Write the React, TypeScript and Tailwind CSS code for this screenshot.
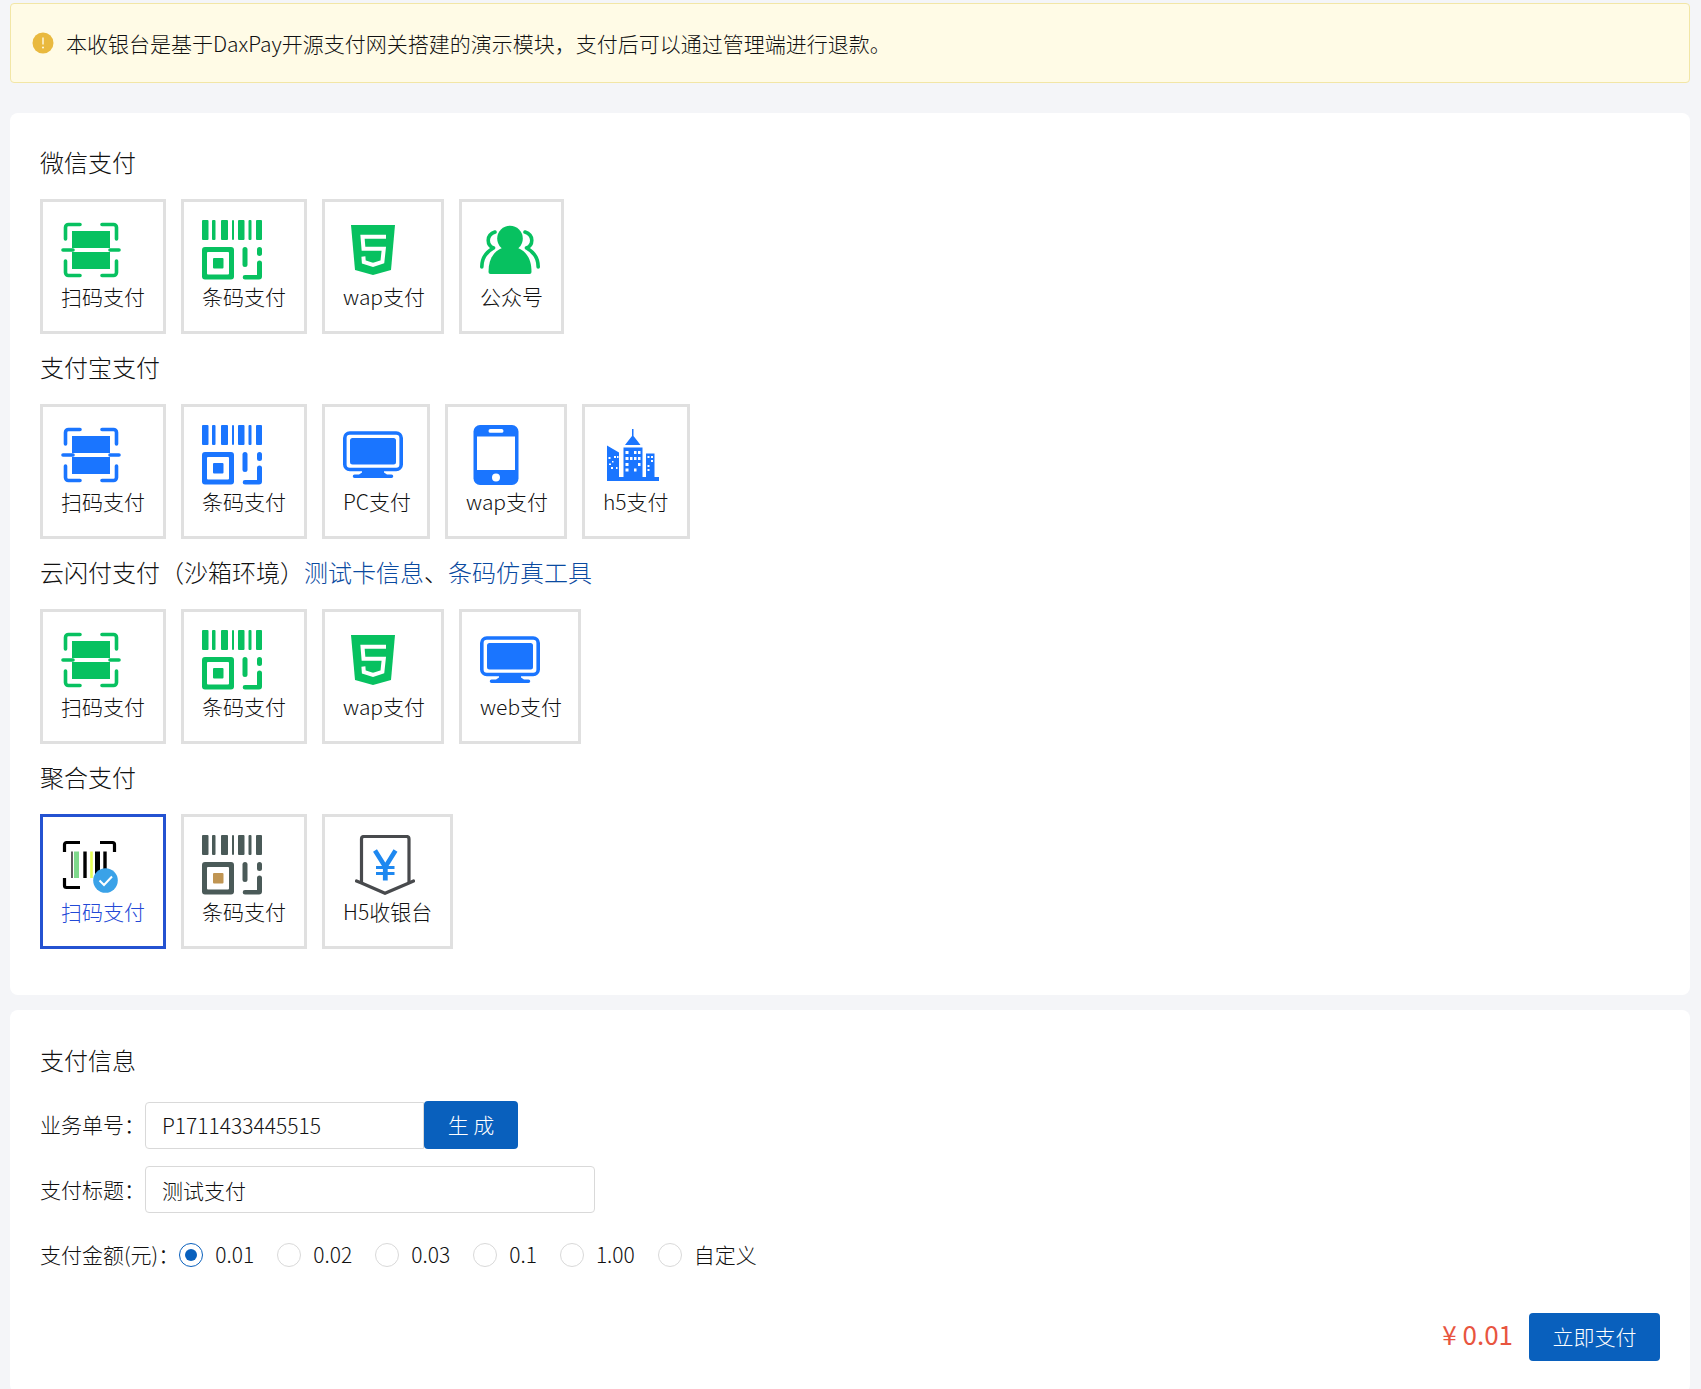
import React, { useState } from "react";

const FONT = "font-['Noto_Sans_CJK_SC',sans-serif]";

type IconProps = { color: string };

function ScanIcon({ color }: IconProps) {
  return (
    <svg viewBox="0 0 60 60" className="size-[60px]" fill="none" aria-hidden="true">
      <g stroke={color} strokeWidth="3.6" strokeLinecap="round" strokeLinejoin="round">
        <path d="M4.5 19V7.500a3 3 0 0 1 3-3H19M41 4.500h11.500a3 3 0 0 1 3 3V19M55.500 41v11.500a3 3 0 0 1-3 3H41M19 55.500H7.500a3 3 0 0 1-3-3V41" />
        <path d="M2 30h10M49 30h9" />
      </g>
      <path d="M11 11h38v17H11zM11 32h38v17H11z" fill={color} />
    </svg>
  );
}

function CodeIcon({ color, center }: IconProps & { center?: string }) {
  return (
    <svg viewBox="0 0 60 60" className="size-[60px]" fill={color} aria-hidden="true">
      <rect x="0" y="0" width="6.500" height="20" rx="1" />
      <rect x="10" y="0" width="3.500" height="20" rx="1" />
      <rect x="19" y="0" width="7" height="20" rx="1" />
      <rect x="30" y="0" width="2" height="20" rx="1" />
      <rect x="36" y="0" width="6.500" height="20" rx="1" />
      <rect x="46.500" y="0" width="3" height="20" rx="1" />
      <rect x="54" y="0" width="6" height="20" rx="1" />
      <path fillRule="evenodd" d="M3 27h26a3 3 0 0 1 3 3v26.500a3 3 0 0 1-3 3H3a3 3 0 0 1-3-3V30a3 3 0 0 1 3-3zM6 32a1 1 0 0 0-1 1v20.500a1 1 0 0 0 1 1h20a1 1 0 0 0 1-1V33a1 1 0 0 0-1-1z" />
      <rect x="11" y="38" width="10.500" height="10.500" rx="1" fill={center ?? color} />
      <rect x="40.500" y="27" width="5" height="20" rx="2.500" />
      <rect x="55" y="27" width="5" height="9" rx="2.500" />
      <path d="M57.500 40.500a2.500 2.500 0 0 1 2.500 2.500v13.500a3 3 0 0 1-3 3H43a2.300 2.300 0 0 1 0-4.600h12V43a2.500 2.500 0 0 1 2.500-2.500z" />
    </svg>
  );
}

function Html5Icon({ color }: IconProps) {
  return (
    <svg viewBox="0 0 60 60" className="size-[60px]" fill="none" aria-hidden="true">
      <path d="M8 5h44l-4 45-18 5-18-5z" fill={color} />
      <path d="M43 16.800H19.500l1 12h20.300l-1.400 13L30 44.800l-9.200-2.800-.4-5.500" stroke="#fff" strokeWidth="4" />
    </svg>
  );
}

function PeopleIcon({ color }: IconProps) {
  return (
    <svg viewBox="0 0 60 60" className="size-[60px]" aria-hidden="true">
      <g fill="none" stroke={color} strokeWidth="3.600" strokeLinecap="round" strokeLinejoin="round">
        <path d="M15 12C6 15 6.500 25 13.500 28C6 32 1.800 39 1.800 47" />
        <path d="M45 12C54 15 53.500 25 46.500 28C54 32 58.200 39 58.200 47" />
      </g>
      <circle cx="30" cy="18.500" r="12.800" fill={color} />
      <path d="M22 28h16c9 4 13.500 11.500 13.500 24a2 2 0 0 1-2 2h-39a2 2 0 0 1-2-2C8.500 39.500 13 32 22 28z" fill={color} />
    </svg>
  );
}

function MonitorIcon({ color }: IconProps) {
  return (
    <svg viewBox="0 0 60 60" className="size-[60px]" aria-hidden="true">
      <rect x="1.800" y="8" width="56.400" height="36.500" rx="5" fill="none" stroke={color} strokeWidth="3.600" />
      <rect x="7" y="13" width="46" height="26.500" rx="2.500" fill={color} />
      <path d="M19 45h22v2.500l3 2h4.500a1.700 1.700 0 0 1 0 3.500h-37a1.700 1.700 0 0 1 0-3.500H16l3-2z" fill={color} />
    </svg>
  );
}

function PhoneIcon({ color }: IconProps) {
  return (
    <svg viewBox="0 0 60 60" className="size-[60px]" aria-hidden="true">
      <rect x="7.500" y="0" width="45" height="60" rx="6.500" fill={color} />
      <rect x="11" y="11.500" width="38" height="33.500" fill="#fff" />
      <rect x="22.500" y="4" width="15" height="3.800" rx="1.900" fill="#fff" />
      <circle cx="30" cy="52.500" r="4" fill="#fff" />
    </svg>
  );
}

function CityIcon({ color }: IconProps) {
  return (
    <svg viewBox="0 0 60 60" className="size-[60px]" aria-hidden="true">
      <path
        d="M4 20.500l12 7V52h4.500V22.500h19V52H43V28.500h8.500V52H56v4H4zM29 4h1.500v7q4 5 7 9h-15.500q3-4 7-9z"
        fill={color}
      />
      <path
        fill="#fff"
        d="M5.500 32h2v2h-2zM9 36h1.500v1.500H9zM11 31h2v2h-2zM14 31h1.500v2H14zM6 38.500h2v1.500H6zM8 42h2v2H8zM13 42h1.500v2H13zM22.500 26h3v3h-3zM31 26h2.500v3H31zM35 26h2.500v3H35zM22.500 32h3v3h-3zM27 32h2.500v3H27zM31 32h2.500v3H31zM35 32h2.500v3H35zM22.500 38h3v3h-3zM35 38h2.500v3H35zM22.500 43.500h3v3h-3zM31 43.500h2.500v3H31zM44.500 31h2v2h-2zM48 31h2v2h-2zM48 35h2v2h-2zM44.500 40h2v2h-2zM44.500 44h2v2h-2z"
      />
    </svg>
  );
}

function AggregateScanIcon() {
  return (
    <svg viewBox="0 0 60 60" className="size-[60px]" fill="none" aria-hidden="true">
      <path d="M3.500 17V9.500a2 2 0 0 1 2-2H19M39 7.500h12.500a2 2 0 0 1 2 2V17M3.500 43v7.500a2 2 0 0 0 2 2H19" stroke="#000" strokeWidth="3.200" />
      <path d="M11 16.500V43" stroke="#333" strokeWidth="1.600" />
      <path d="M15.500 16.500V43" stroke="#7fd98c" strokeWidth="5" />
      <path d="M24 16.500V43" stroke="#000" strokeWidth="3.400" />
      <path d="M30.500 16.500V43" stroke="#e6ff57" strokeWidth="2.600" />
      <path d="M36.500 16.500V43" stroke="#000" strokeWidth="5" />
      <path d="M44 16.500V38" stroke="#000" strokeWidth="3.400" />
      <circle cx="44.500" cy="45.500" r="12.300" fill="#3aa2e8" />
      <path d="M38.500 45.500l4.500 4.500 8-8.500" stroke="#fff" strokeWidth="2" />
    </svg>
  );
}

function CashierIcon() {
  return (
    <svg viewBox="0 0 60 60" className="size-[60px]" fill="none" aria-hidden="true">
      <path d="M6.500 48.500V4a2.500 2.500 0 0 1 2.500-2.500h42.500a2.500 2.500 0 0 1 2.500 2.500v44.500" stroke="#484a4d" strokeWidth="3.200" />
      <path d="M1.500 46l5 2L30 58.300 54 48l4.500-2" stroke="#484a4d" strokeWidth="3.200" strokeLinecap="round" />
      <path d="M20 15.500l10.300 16.500L40.500 15.500" stroke="#1e88f0" strokeWidth="4.600" />
      <path d="M21 32.500h18.500M21 38.500h18.500" stroke="#1e88f0" strokeWidth="3.200" />
      <path d="M30.300 30v15.500" stroke="#1e88f0" strokeWidth="4.800" />
    </svg>
  );
}

const GREEN = "#07c160";
const BLUE = "#1a75ff";

type Method = { id: string; label: string; icon: React.ReactNode; width: string; indent?: string };

const WIDE = "w-[126px]";
const MEDIUM = "w-[122px]";
const NARROW = "w-[108px]";

const wechat: Method[] = [
  { id: "wx-scan", label: "扫码支付", icon: <ScanIcon color={GREEN} />, width: WIDE },
  { id: "wx-code", label: "条码支付", icon: <CodeIcon color={GREEN} />, width: WIDE },
  { id: "wx-wap", label: "wap支付", icon: <Html5Icon color={GREEN} />, width: MEDIUM },
  { id: "wx-mp", label: "公众号", icon: <PeopleIcon color={GREEN} />, width: "w-[105px]" },
];

const alipay: Method[] = [
  { id: "ali-scan", label: "扫码支付", icon: <ScanIcon color={BLUE} />, width: WIDE },
  { id: "ali-code", label: "条码支付", icon: <CodeIcon color={BLUE} />, width: WIDE },
  { id: "ali-pc", label: "PC支付", icon: <MonitorIcon color={BLUE} />, width: NARROW },
  { id: "ali-wap", label: "wap支付", icon: <PhoneIcon color={BLUE} />, width: MEDIUM },
  { id: "ali-h5", label: "h5支付", icon: <CityIcon color={BLUE} />, width: NARROW },
];

const union: Method[] = [
  { id: "un-scan", label: "扫码支付", icon: <ScanIcon color={GREEN} />, width: WIDE },
  { id: "un-code", label: "条码支付", icon: <CodeIcon color={GREEN} />, width: WIDE },
  { id: "un-wap", label: "wap支付", icon: <Html5Icon color={GREEN} />, width: MEDIUM },
  { id: "un-web", label: "web支付", icon: <MonitorIcon color={BLUE} />, width: MEDIUM },
];

const aggregate: Method[] = [
  { id: "ag-scan", label: "扫码支付", icon: <AggregateScanIcon />, width: WIDE },
  { id: "ag-code", label: "条码支付", icon: <CodeIcon color="#4a5a58" center="#c09553" />, width: WIDE },
  { id: "ag-h5", label: "H5收银台", icon: <CashierIcon />, width: "w-[131px]", indent: "ml-3" },
];

type GroupProps = {
  title: React.ReactNode;
  methods: Method[];
  selected: string;
  onSelect: (id: string) => void;
};

function MethodGroup({ title, methods, selected, onSelect }: GroupProps) {
  return (
    <section>
      <h2 className="mb-[19px] text-2xl leading-9">{title}</h2>
      <div className="flex flex-wrap gap-[15px]">
        {methods.map((m) => (
          <button
            key={m.id}
            type="button"
            aria-pressed={selected === m.id}
            onClick={() => onSelect(m.id)}
            className={
              "flex flex-col items-start whitespace-nowrap border-[3px] p-[18px] text-[21px] leading-[33px] " +
              m.width +
              (selected === m.id ? " border-[#2452d1] text-[#2349d6]" : " border-[#e0e0e0]")
            }
          >
            <span className={m.indent ?? ""}>{m.icon}</span>
            <span>{m.label}</span>
          </button>
        ))}
      </div>
    </section>
  );
}

const amounts = ["0.01", "0.02", "0.03", "0.1", "1.00", "自定义"];

export default function App() {
  const [selected, setSelected] = useState("ag-scan");
  const [amount, setAmount] = useState("0.01");
  const [orderNo, setOrderNo] = useState("P1711433445515");
  const [title, setTitle] = useState("测试支付");
  const group = { selected, onSelect: setSelected };

  return (
    <div lang="zh-CN" className={`min-h-screen bg-[#f4f5f8] pt-[3px] pr-[11px] pl-[10px] text-[21px] font-light text-[#111] ${FONT}`}>
      <div role="alert" className="flex items-center gap-3 rounded-sm border border-[#f2e6a6] bg-[#fffbe6] px-[21px] py-[23px] leading-8">
        <svg viewBox="0 0 22 22" className="size-[22px]" aria-hidden="true">
          <circle cx="11" cy="11" r="10.500" fill="#e9b93f" />
          <path d="M11 5.500v7" stroke="#fffbe6" strokeWidth="1.400" />
          <circle cx="11" cy="15.500" r="1" fill="#fffbe6" />
        </svg>
        <p>本收银台是基于DaxPay开源支付网关搭建的演示模块，支付后可以通过管理端进行退款。</p>
      </div>

      <main>
        <div className="mt-[30px] flex flex-col gap-[15px] rounded-lg bg-white px-[30px] pt-[31px] pb-[46px]">
          <MethodGroup title="微信支付" methods={wechat} {...group} />
          <MethodGroup title="支付宝支付" methods={alipay} {...group} />
          <MethodGroup
            title={
              <>
                云闪付支付（沙箱环境）<a href="#cards" className="text-[#0a4aa0]">测试卡信息</a>、
                <a href="#simulator" className="text-[#0a4aa0]">条码仿真工具</a>
              </>
            }
            methods={union}
            {...group}
          />
          <MethodGroup title="聚合支付" methods={aggregate} {...group} />
        </div>

        <form className="mt-[15px] rounded-lg bg-white px-[30px] pt-8 pb-8" onSubmit={(e) => e.preventDefault()}>
          <h2 className="text-2xl leading-9">支付信息</h2>
          <div className="mt-[23px] flex items-center">
            <label htmlFor="order">业务单号：</label>
            <input
              id="order"
              value={orderNo}
              onChange={(e) => setOrderNo(e.target.value)}
              className="h-[47px] w-[279px] rounded-l-sm border border-[#d9d9d9] px-4 outline-none"
            />
            <button
              type="button"
              onClick={() => setOrderNo("P" + Date.now())}
              className="h-12 w-[94px] rounded-sm bg-[#0960bd] text-white"
            >
              生 成
            </button>
          </div>
          <div className="mt-[17px] flex items-center">
            <label htmlFor="title">支付标题：</label>
            <input
              id="title"
              value={title}
              onChange={(e) => setTitle(e.target.value)}
              className="h-[47px] w-[450px] rounded-sm border border-[#d9d9d9] px-4 outline-none"
            />
          </div>
          <fieldset className="mt-[25px] flex items-center leading-[33px]">
            <legend className="float-left">支付金额(元)：</legend>
            {amounts.map((a) => (
              <label key={a} className="mr-[23px] flex items-center gap-3">
                <input
                  type="radio"
                  name="amount"
                  value={a}
                  checked={amount === a}
                  onChange={() => setAmount(a)}
                  className="size-6 appearance-none rounded-full border border-[#d9d9d9] bg-white bg-clip-content p-[5px] checked:border-[#0960bd] checked:bg-[#0960bd]"
                />
                {a}
              </label>
            ))}
          </fieldset>
          <div className="mt-[42px] flex items-start justify-end gap-4">
            <span className="text-[26px] leading-[42px] font-normal text-[#e8553f]">¥ {amount}</span>
            <button type="submit" className="h-12 w-[131px] rounded-sm bg-[#0960bd] text-white">
              立即支付
            </button>
          </div>
        </form>
      </main>
    </div>
  );
}
